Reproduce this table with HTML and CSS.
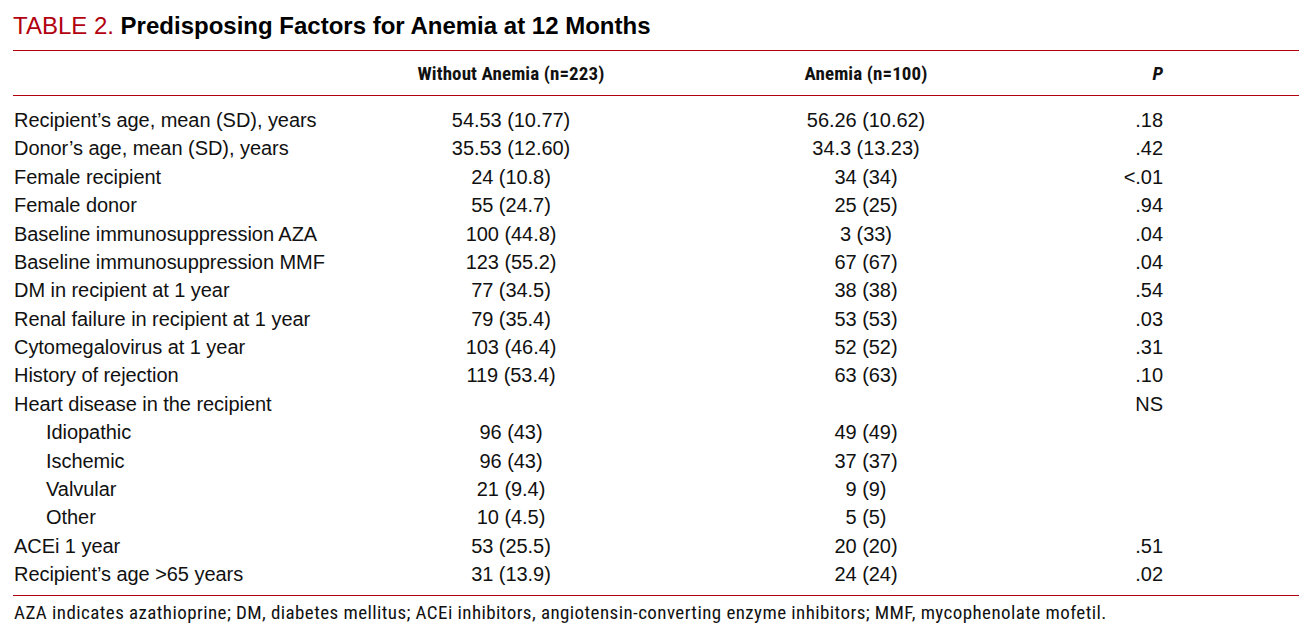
FILE: index.html
```html
<!DOCTYPE html>
<html lang="en">
<head>
<meta charset="utf-8">
<title>Table 2</title>
<link rel="stylesheet" href="styles.css">
</head>
<body>
<div class="page">
  <h1 class="title"><span class="label">TABLE 2.</span> <span class="caption">Predisposing Factors for Anemia at 12 Months</span></h1>
  <div class="table">
    <div class="head">
      <div class="c1"></div>
      <div class="c2">Without Anemia (n=223)</div>
      <div class="c3">Anemia (n=100)</div>
      <div class="c4"><i>P</i></div>
    </div>
    <div class="body">
      <div class="row"><div class="c1">Recipient’s age, mean (SD), years</div><div class="c2">54.53 (10.77)</div><div class="c3">56.26 (10.62)</div><div class="c4">.18</div></div>
      <div class="row"><div class="c1">Donor’s age, mean (SD), years</div><div class="c2">35.53 (12.60)</div><div class="c3">34.3 (13.23)</div><div class="c4">.42</div></div>
      <div class="row"><div class="c1">Female recipient</div><div class="c2">24 (10.8)</div><div class="c3">34 (34)</div><div class="c4">&lt;.01</div></div>
      <div class="row"><div class="c1">Female donor</div><div class="c2">55 (24.7)</div><div class="c3">25 (25)</div><div class="c4">.94</div></div>
      <div class="row"><div class="c1">Baseline immunosuppression AZA</div><div class="c2">100 (44.8)</div><div class="c3">3 (33)</div><div class="c4">.04</div></div>
      <div class="row"><div class="c1">Baseline immunosuppression MMF</div><div class="c2">123 (55.2)</div><div class="c3">67 (67)</div><div class="c4">.04</div></div>
      <div class="row"><div class="c1">DM in recipient at 1 year</div><div class="c2">77 (34.5)</div><div class="c3">38 (38)</div><div class="c4">.54</div></div>
      <div class="row"><div class="c1">Renal failure in recipient at 1 year</div><div class="c2">79 (35.4)</div><div class="c3">53 (53)</div><div class="c4">.03</div></div>
      <div class="row"><div class="c1">Cytomegalovirus at 1 year</div><div class="c2">103 (46.4)</div><div class="c3">52 (52)</div><div class="c4">.31</div></div>
      <div class="row"><div class="c1">History of rejection</div><div class="c2">119 (53.4)</div><div class="c3">63 (63)</div><div class="c4">.10</div></div>
      <div class="row"><div class="c1">Heart disease in the recipient</div><div class="c2"></div><div class="c3"></div><div class="c4">NS</div></div>
      <div class="row"><div class="c1 sub">Idiopathic</div><div class="c2">96 (43)</div><div class="c3">49 (49)</div><div class="c4"></div></div>
      <div class="row"><div class="c1 sub">Ischemic</div><div class="c2">96 (43)</div><div class="c3">37 (37)</div><div class="c4"></div></div>
      <div class="row"><div class="c1 sub">Valvular</div><div class="c2">21 (9.4)</div><div class="c3">9 (9)</div><div class="c4"></div></div>
      <div class="row"><div class="c1 sub">Other</div><div class="c2">10 (4.5)</div><div class="c3">5 (5)</div><div class="c4"></div></div>
      <div class="row"><div class="c1">ACEi 1 year</div><div class="c2">53 (25.5)</div><div class="c3">20 (20)</div><div class="c4">.51</div></div>
      <div class="row"><div class="c1">Recipient’s age &gt;65 years</div><div class="c2">31 (13.9)</div><div class="c3">24 (24)</div><div class="c4">.02</div></div>
    </div>
  </div>
  <p class="note">AZA indicates azathioprine; DM, diabetes mellitus; ACEi inhibitors, angiotensin-converting enzyme inhibitors; MMF, mycophenolate mofetil.</p>
</div>
</body>
</html>
```
FILE: styles.css
```css
html, body {
  margin: 0;
  padding: 0;
  background: #ffffff;
}
body {
  font-family: "Liberation Sans", Arial, sans-serif;
  color: #111111;
}
.page {
  padding: 0 12px 0 13px;
  width: 1286px;
}
.title {
  margin: 0;
  height: 50px;
  line-height: 52px;
  font-size: 24px;
  font-weight: normal;
  white-space: nowrap;
}
.title .label {
  color: #b2000f;
}
.title .caption {
  font-weight: bold;
  color: #000000;
}
.table {
  border-top: 1px solid #b2000f;
  border-bottom: 1px solid #b2000f;
}
.head, .row {
  display: grid;
  grid-template-columns: 387px 222px 488px 53px 1fr;
}
.head {
  height: 44px;
  align-items: center;
  border-bottom: 1px solid #b2000f;
  font-family: "Roboto Condensed", "Liberation Sans", sans-serif;
  font-weight: bold;
  font-size: 19px;
  letter-spacing: 0.1px;
}
.body {
  padding: 10px 0 7px;
}
.row {
  height: 28.375px;
  line-height: 28.375px;
  font-size: 20px;
  letter-spacing: -0.05px;
  white-space: nowrap;
}
.c1 { padding-left: 1px; }
.c1.sub { padding-left: 33px; }
.c2, .c3 { text-align: center; }
.c4 { text-align: right; }
.note {
  margin: 0;
  padding-left: 1px;
  line-height: 34px;
  font-family: "Roboto Condensed", "Liberation Sans", sans-serif;
  font-size: 19px;
  letter-spacing: 0.42px;
  white-space: nowrap;
}
```
